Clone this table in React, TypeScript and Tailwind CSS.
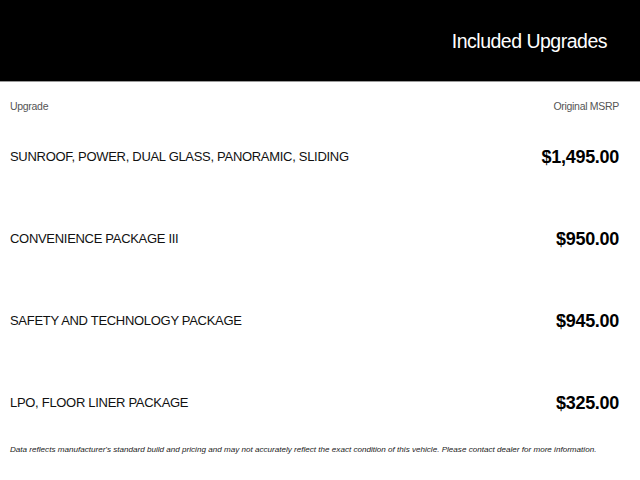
const upgrades = [
  { name: "SUNROOF, POWER, DUAL GLASS, PANORAMIC, SLIDING", price: "$1,495.00" },
  { name: "CONVENIENCE PACKAGE III", price: "$950.00" },
  { name: "SAFETY AND TECHNOLOGY PACKAGE", price: "$945.00" },
  { name: "LPO, FLOOR LINER PACKAGE", price: "$325.00" },
];

export default function App() {
  return (
    <div className="w-[640px] h-[480px] bg-white overflow-hidden" style={{ fontFamily: '"Liberation Sans", Arial, sans-serif' }}>
      {/* Header */}
      <div className="h-[82px] bg-black border-b border-[#9a9a9a] flex items-center justify-end pr-[33px] pt-[2px]">
        <h1 className="text-white text-[19.5px] tracking-[-0.5px] leading-none">Included Upgrades</h1>
      </div>

      <div className="pl-[10px] pr-[21px]">
        {/* Column headers */}
        <div className="flex justify-between pt-[18px] h-[34px] text-[10.5px] tracking-[-0.3px] leading-[13px] text-[#555]">
          <span>Upgrade</span>
          <span>Original MSRP</span>
        </div>

        {upgrades.map((u) => (
          <div key={u.name} className="h-[82px] flex items-center justify-between">
            <span className="text-[13px] tracking-[-0.3px] text-[#111]">{u.name}</span>
            <span className="text-[18px] tracking-[-0.3px] font-bold text-black">{u.price}</span>
          </div>
        ))}

        <p className="mt-[1px] text-[8.1px] italic text-[#222] leading-[10px]">
          Data reflects manufacturer's standard build and pricing and may not accurately reflect the exact condition of this vehicle. Please contact dealer for more information.
        </p>
      </div>
    </div>
  );
}
